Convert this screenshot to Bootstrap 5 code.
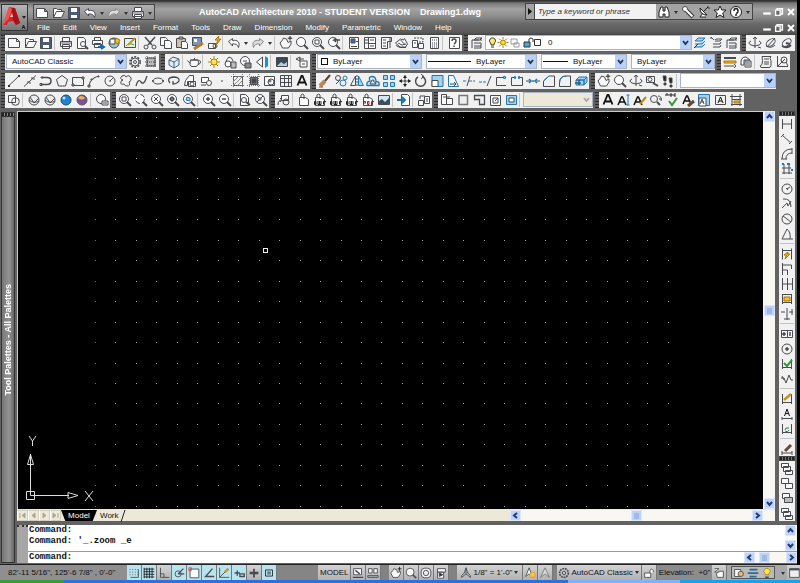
<!DOCTYPE html>
<html lang="en">
<head>
<meta charset="utf-8">
<meta name="viewport" content="width=device-width, initial-scale=1">
<title>AutoCAD Architecture 2010 - Drawing1.dwg</title>
<link href="https://cdn.jsdelivr.net/npm/bootstrap@5.3.0/dist/css/bootstrap.min.css" rel="stylesheet">
<style>
html,body{height:100%}
body{font:8px/12px "Liberation Sans",Arial,sans-serif;color:#111;background:#000;overflow:hidden}
.app-frame{height:100vh}
.app-main{background:#626262;margin-right:3px}
.fit{min-height:0;min-width:0}
button,input,select{font:inherit;color:inherit;border:0;padding:0;background:none;border-radius:0;min-width:0}
svg{display:block;flex:none}
.ico{width:16px;height:16px;fill:none;stroke:#484b50;stroke-width:1}
.tool{width:16px;height:16px;flex:none;overflow:hidden}
.head{height:35px;background:linear-gradient(#333 0,#333 1px,#777 3px,#a2a2a2 9px,#8b8b8b 17px,#686868 24px,#5b5b5b 32px,#444 35px);color:#fff}
.logo-btn{width:27px;height:27px;margin:4px 0 0 1px;background:linear-gradient(#b5b5b5,#777);border:1px solid #333;align-self:flex-start}
.quick{height:16px;border:1px solid #444;background:linear-gradient(#b0b0b0,#8e8e8e);margin:4px 0 0 5px}
.quick .ico,.info .ico,.win .ico{--pf:#fff}
.caption{font-weight:bold;font-size:9px;line-height:16px;padding-top:4px;white-space:pre}
.info{height:17px;border:1px solid #444;background:#a3a3a3;margin:3px 8px 0 0}
.info .expand{width:8px}
.info .expand .ico{margin-left:-3px}
.info input{width:122px;height:15px;background:#f2f2f2;font-style:italic;color:#333;padding-left:3px;border-left:1px solid #444}
.info input::placeholder{color:#333;opacity:1}
.win .tool{width:12px}
.win .ico{width:12px;stroke:#fff;stroke-width:2}
.menus{padding-left:2px}
.menus a{color:#fff;text-decoration:none;padding:0 6px 0 7px;line-height:16px}
.bars{gap:3px;padding-bottom:3px}
.bar-row{height:16px}
.strip{height:16px;padding-left:5px;background:repeating-linear-gradient(#2c2c2c 0 1px,#5c5c5c 1px 3px) left/4px 100% no-repeat,#f1f1f1;margin-right:2px}
.strip.first{margin-left:1px}
.sepa{width:4px;height:14px;flex:none;border-left:1px solid #c4c4c4;margin-top:1px}
.down{width:8px;height:16px;flex:none;display:flex;align-items:center;justify-content:center}
.down::after{content:"";border:2px solid transparent;border-top:3px solid #333;border-bottom:0}
.combo{height:15px;background:#fff;border:1px solid #a9b4c4;position:relative;display:flex;align-items:center}
.combo select{appearance:none;width:100%;height:13px;background:transparent;padding-left:5px;outline:0}
.combo::after{content:"";position:absolute;right:0;top:0;width:11px;height:13px;pointer-events:none;background:url("data:image/svg+xml,%3Csvg xmlns='http://www.w3.org/2000/svg' viewBox='0 0 11 13'%3E%3Cpath d='M3 5l2.500 3L8 5' fill='none' stroke='%23234' stroke-width='1.800'/%3E%3C/svg%3E") #b9d0fb}
.combo.off,.combo.off::after{background-color:#ece9d8}
.combo.off::after{filter:grayscale(1) opacity(.35)}
.swatch{width:7px;height:7px;border:1px solid #111;margin-left:3px;flex:none}
.dash{height:1px;background:#111;margin-left:1px;flex:none}
.w-a{width:121px}.w-b{width:105px}.w-c{width:111px}.w-d{width:86px}.w-e{width:84px}.w-f{width:96px}.w-g{width:70px}.w-layer{width:207px}
.dash.l1{width:43px}.dash.l2{width:25px}
.palette{width:14px;margin:1px 2px 1px 1px;border:1px solid #333;background:linear-gradient(90deg,#777,#949494 60%,#666);color:#fff;font-size:9px}
.palette .knob{height:4px;border-bottom:1px solid #333;background:repeating-linear-gradient(90deg,#222 0 2px,#888 2px 3px);width:100%}
.palette span{writing-mode:vertical-rl;transform:rotate(180deg);font-weight:bold;white-space:nowrap}
.view{border:1px solid #ccc;border-right:0;border-bottom:0;background:#000;position:relative;overflow:hidden}
.grid-dots{position:absolute;left:0;top:0;width:100%;height:100%;fill:#aaa}
.ucs{position:absolute;left:7px;bottom:1px;fill:none;stroke:#ddd}
.vbar{width:12px;background:#f8f7f2}
.vbar button,.hbar button{width:11px;height:11px;background:#bed2fa;border:1px solid #dbe6ff;flex:none}
.vbar button svg,.hbar button svg{margin:0 auto;stroke:#223a70;fill:none;stroke-width:2}
.hbar{background:#f8f7f2;height:11px}
.tabsrow{height:12px;background:#ece9d8;padding-top:1px;line-height:11px}
.tabnav button{width:11px;height:11px;border:1px solid #d2cfc0;border-left-color:#fff}
.tabnav svg{fill:#aaa890;stroke:#aaa890}
.tab-on{background:#000;color:#fff;width:36px;clip-path:polygon(0 0,100% 0,88% 100%,12% 100%);text-align:center}
.tab-off{padding-left:3px}
.dock{width:16px;background:#f1f1f1;margin:0 2px 0 4px;overflow:hidden}
.dock .tool{height:15px;flex:none}
.dock .sepa{width:14px;height:3px;border-left:0;border-top:1px solid #c4c4c4;margin:2px 1px 0}
.dock .knob{height:5px;flex:none;background:repeating-linear-gradient(90deg,#222 0 2px,#777 2px 3px);border:1px solid #444}
.cmd{background:#fff;font:bold 9px/11px "Liberation Mono","Courier New",monospace;margin:4px 0 1px;height:38px}
.cmd .side{width:11px;background:#a6a6a6;border-top:2px dotted #333}
.cmd .past{border-bottom:1px solid #999;height:27px;white-space:nowrap}
.cmd input{width:100%;height:11px;outline:0}
.cmd .past,.cmd input{padding-left:1px}
.status{height:16px;background:#a9a9a9;border-top:1px solid #222;margin-right:3px}
.status .cell{height:15px;background:linear-gradient(#d3d3d3,#b2b2b2);border-right:1px solid #777;display:flex;align-items:center;flex:none;width:15px;justify-content:center;white-space:nowrap;overflow:hidden}
.status .cell .ico{width:14px;height:14px}
.status .cell.on{background:#b9e4ef}
.status .cell.wide{width:auto;padding:0 2px}
.status .cell.snug{padding:0}
.status .gap-dark{width:8px;background:#828282;flex:none}
.status .gap-thin{width:4px}
.status .gap-mid{flex:none;width:41px;background:#858585}
.coords{width:127px;background:#8f8f8f;padding-left:8px;line-height:15px;flex:none;white-space:nowrap}
.elev{background:#8c8c8c;line-height:15px;padding:0 2px;white-space:nowrap;flex:none}
.tray{border:1px solid #555;height:13px;background:#bbb;margin:1px 4px 0 4px;flex:none}
.status .tray .cell{width:14px;border:0;height:11px;background:none}
.task{height:3px;background:linear-gradient(90deg,#3c9b3c 0 8%,#2b72e0 8% 71%,#7fb2f7 71% 85%,#12a5ee 85%)}
</style>
</head>
<body>
<div class="app-frame d-flex flex-column">
 <div class="app-main fit d-flex flex-column flex-grow-1">
  <header class="head d-flex flex-shrink-0">
   <button class="logo-btn" aria-label="Application menu"><svg width="25" height="25" viewBox="0 0 25 25"><path d="M1 20L7 2l6 1 5 15-4 2-3-4-5 1-1 3z" fill="#d8252c"/><path d="M9 3l4 0 5 15-4 2-3-5z" fill="#a5141a"/><path d="M1 20L7 2l3 2-3 9z" fill="#f2554f"/><path d="M8 12l2-4 1 4z" fill="#f7c9c6"/><path d="M20 11h4l-2 3z" fill="#222"/><path d="M20 24l1.500-4L23 24M20.500 22.500h2" stroke="#222" fill="none"/></svg></button>
   <div class="flex-grow-1 d-flex flex-column">
    <div class="d-flex justify-content-between">
     <div class="quick d-flex" data-tools="new open save undo . redo . print ."></div>
     <div class="caption">AutoCAD Architecture 2010 - STUDENT VERSION    Drawing1.dwg</div>
     <div class="d-flex">
      <div class="info d-flex"><button class="tool expand" aria-label="Expand"><svg class="ico" viewBox="0 0 16 16"><path d="M5 4l4 3.500L5 11z" fill="#111" stroke="none"/></svg></button><input type="text" aria-label="Search" placeholder="Type a keyword or phrase"><span class="d-flex" data-tools="bino . key dish star help2 ."></span></div>
      <div class="win d-flex pt-1" data-tools="wmin wmax wclose"></div>
     </div>
    </div>
    <div class="d-flex justify-content-between">
     <nav class="menus d-flex"><a href="#">File</a><a href="#">Edit</a><a href="#">View</a><a href="#">Insert</a><a href="#">Format</a><a href="#">Tools</a><a href="#">Draw</a><a href="#">Dimension</a><a href="#">Modify</a><a href="#">Parametric</a><a href="#">Window</a><a href="#">Help</a></nav>
     <div class="win d-flex" data-tools="wmin wmax wclose"></div>
    </div>
   </div>
  </header>

  <div class="bars d-flex flex-column flex-shrink-0">
   <div class="bar-row d-flex">
    <div class="strip first d-flex" data-tools="new open save | print preview publish dwf markup | cut copy paste brush blockedit | undo . redo . | pan zoom zwin zprev | props dcenter tpal sheets mset calc | help"></div>
    <div class="strip d-flex"><span class="d-flex" data-tools="layers"></span>
     <div class="combo w-layer"><svg width="62" height="13" viewBox="0 0 62 13" fill="none" stroke="#333"><path d="M5 9V7.500a3 3 0 1 1 3 0V9z" fill="#ffe86b"/><path d="M5 11h3"/><circle cx="17" cy="6.500" r="2.500" fill="#ffd83d" stroke="#a67a00"/><path d="M17 1v2M17 10v2M11.500 6.500h2M20.500 6.500h2M13 2.500l1.500 1.500M21 2.500L19.500 4M13 10.500L14.500 9M21 10.500L19.500 9" stroke="#a67a00"/><path d="M25 3h6v5h-6zM28 7h5v4h-5z" stroke="#999"/><path d="M38 6h6v5h-6z" fill="#48a5da"/><path d="M43 6V3q2-2 4 0v3"/><path d="M48.500 3.500h6v6h-6z" fill="#fff"/></svg><select aria-label="Layer" class="px-0"><option>0</option></select></div>
     <span class="d-flex" data-tools="lay1 lay2 layers"></span></div>
    <div class="strip d-flex" data-tools="orbit orb2 orb3"></div>
   </div>
   <div class="bar-row d-flex">
    <div class="strip first d-flex"><div class="combo w-a"><select aria-label="Workspace"><option>AutoCAD Classic</option></select></div><span class="d-flex" data-tools="gear wsave"></span></div>
    <div class="strip d-flex" data-tools="cube | teapot | sun matl matb mirror3 | imgd | rset"></div>
    <div class="strip d-flex gap-1"><div class="combo w-b"><span class="swatch"></span><select aria-label="Color"><option>ByLayer</option></select></div><div class="combo w-c"><span class="dash l1"></span><select aria-label="Linetype"><option>ByLayer</option></select></div><div class="combo w-d"><span class="dash l2"></span><select aria-label="Lineweight"><option>ByLayer</option></select></div><div class="combo w-e"><select aria-label="Plot style"><option>ByLayer</option></select></div></div>
    <div class="strip d-flex" data-tools="dist massp | list locate"></div>
   </div>
   <div class="bar-row d-flex">
    <div class="strip first d-flex" data-tools="line xline pline poly rect arc circle cloud spline ellipse earc insert mkblock point hatch grad region table text"></div>
    <div class="strip d-flex" data-tools="erase copyo mirror offset array move rotate scale stretch trim extend breakp break join chamfer fillet explode"></div>
    <div class="strip d-flex"><span class="d-flex" data-tools="pan zoom orbit camera walk |"></span><div class="combo w-f"><select aria-label="View"><option></option></select></div></div>
   </div>
   <div class="bar-row d-flex">
    <div class="strip first d-flex" data-tools="vs1 | vs2 vs2 vblue vcol | vman"></div>
    <div class="strip d-flex" data-tools="zwin zdyn zx zcen zobj | zin zout | zall zext"></div>
    <div class="strip d-flex" data-tools="xref | att dwfa dwfa dwfa pdfa image | import | fields"></div>
    <div class="strip d-flex"><span class="d-flex" data-tools="vp1 vp2 vp3 vp4 vp5 |"></span><div class="combo off w-g"><select aria-label="Viewport scale" disabled><option></option></select></div></div>
    <div class="strip d-flex" data-tools="text mtext tedit find spell tstyle tscale tjust tspace"></div>
   </div>
  </div>

  <main class="fit d-flex flex-grow-1">
   <aside class="palette d-flex flex-column align-items-center"><div class="knob"></div><span class="my-auto">Tool Palettes - All Palettes</span></aside>
   <div class="fit d-flex flex-column flex-grow-1">
    <div class="fit d-flex flex-grow-1">
     <section class="fit d-flex flex-column flex-grow-1">
      <div class="fit d-flex flex-grow-1">
       <div class="view flex-grow-1">
        <svg class="grid-dots" id="dots"></svg>
        <svg class="ucs" width="76" height="72" viewBox="0 0 76 72"><path d="M1.500 55.500h8v8h-8zM5.500 59.500V18M5.500 59.500H44M2.500 28.500l3-10 3 10zM43 56.500l10 3-10 3zM4 0l3.500 5L11 0M7.500 5v5M60 55l8 10M68 55l-8 10"/></svg>
       </div>
       <div class="vbar d-flex flex-column justify-content-between align-items-center" data-scroll="up thumb down"></div>
      </div>
      <div class="tabsrow d-flex flex-shrink-0">
       <div class="tabnav d-flex"><button aria-label="First"><svg width="9" height="9"><path d="M2 2v5M7 2v5L4 4.500z"/></svg></button><button aria-label="Previous"><svg width="9" height="9"><path d="M6 2v5L3 4.500z"/></svg></button><button aria-label="Next"><svg width="9" height="9"><path d="M3 2v5l3-2.500z"/></svg></button><button aria-label="Last"><svg width="9" height="9"><path d="M2 2v5l3-2.500zM7 2v5"/></svg></button></div>
       <button class="tab-on">Model</button>
       <button class="tab-off d-flex">Work<svg width="8" height="12"><path d="M2 12L6 0" stroke="#222"/></svg></button>
       <div class="flex-grow-1"></div>
       <div class="hbar d-flex justify-content-between col-4" data-scroll="left thumb right"></div>
       <div class="vbar"></div>
      </div>
     </section>
     <aside class="dock d-flex flex-column" data-tools="k dl da darc dord | drad djog ddia dang | dq dbase dcont dsp dbr | tol cen insp jogl | dedit dtedit dupd | dstyle k fr1 fr2 fr3 fr1"></aside>
    </div>
    <div class="cmd d-flex flex-shrink-0">
     <div class="side"></div>
     <div class="flex-grow-1 d-flex flex-column">
      <div class="past d-flex justify-content-between"><div>Command:<br>Command: '_.zoom _e</div><div class="vbar d-flex flex-column justify-content-between" data-scroll="up down"></div></div>
      <div class="d-flex"><input type="text" aria-label="Command line" value="Command:"><div class="hbar d-flex justify-content-between flex-shrink-0 gap-1" data-scroll="left thumb . right"></div></div>
     </div>
    </div>
   </div>
  </main>
 </div>
 <footer class="status d-flex flex-shrink-0">
  <div class="coords">82'-11 5/16", 125'-6 7/8" , 0'-0"</div>
  <span class="d-flex" data-cells="+snap +gridi ortho +polar +osnap +track +ducs +dyn lwt +qp"></span>
  <div class="gap-mid"></div>
  <button class="cell wide">MODEL</button>
  <span class="d-flex" data-cells="qvl qvd"></span><div class="gap-dark"></div>
  <span class="d-flex" data-cells="pan zoom wheel motion"></span><div class="gap-dark"></div>
  <button class="cell wide"><svg class="ico" viewBox="0 0 16 16"><path d="M8 2v7M8 9l-5 4V11l3-3 2-6 2 6 3 3v2z"/></svg>1/8" = 1'-0"<span class="down"></span></button>
  <span class="d-flex" data-cells="anno1 anno2"></span><div class="gap-dark gap-thin"></div>
  <button class="cell wide snug"><svg class="ico" viewBox="0 0 16 16"><circle cx="8" cy="8" r="5" stroke-dasharray="2 1" stroke-width="2"/><circle cx="8" cy="8" r="2"/></svg>AutoCAD Classic<span class="down"></span></button>
  <span class="d-flex" data-cells="lock"></span>
  <div class="elev">Elevation:&nbsp; +0"</div>
  <span class="d-flex" data-cells="zrep"></span>
  <span class="tray d-flex" data-cells="tr1 tr2 bulb"></span>
  <button class="down" aria-label="Status bar menu"></button>
  <span class="d-flex" data-cells="clean"></span>
 </footer>
 <div class="task flex-shrink-0"></div>
</div>
<script src="https://cdn.jsdelivr.net/npm/bootstrap@5.3.0/dist/js/bootstrap.bundle.min.js"></script>
<script>
const p = (d, a = '') => `<path d="${d}" ${a}/>`;
const c = (x, y, r, a = '') => `<circle cx="${x}" cy="${y}" r="${r}" ${a}/>`;
const W = 'style="fill:var(--pf,#fafafa)"';
const blue = 'stroke="#2177b5"', lb = 'fill="#9fd3ef" stroke="#2177b5"', gold = 'fill="#f3c02c" stroke="#a87505"', G = 'fill="#bbb"';
const lens = c(7, 7, 4.5, 'fill="#fff"') + p('M10 10l4 4', 'stroke-width="2"');
const dim = p('M3.500 3v10M12.500 3v10M3.500 11.500h9');
const page = p('M3.500 5.500h6l3 2v6h-9zM5 5.500V3q2-2 3 0v4', W);
const ball = c(8, 8, 5, 'fill="#eee"');
const letterA = (x, y, s) => p(`M${x} ${y}l${s / 2 - .5} ${-s}h1l${s / 2 - .5} ${s}M${x + 1} ${y - 3}h${s - 2}`, 'stroke="#111" stroke-width="1.500"');
const I = {
 new: p('M2.500 3.500h8l3 3v6h-11zM10.500 3.500v3h3', W),
 open: p('M3.500 12.500v-9h3l1 1h4v2M3.500 12.500l3-6h8l-3 6z', W),
 save: p('M2.500 2.500h11v11h-11z', 'fill="#4b5d75"') + p('M5 3h6v4H5zM5 10h6v3H5z', 'fill="#fff" stroke="none"'),
 undo: p('M2.500 6.500l4-3v2c5-1 8 2 6 7-1-3-3-4-6-3.500v2z', W),
 redo: p('M13.500 6.500l-4-3v2c-5-1-8 2-6 7 1-3 3-4 6-3.500v2z', 'fill="#ddd" stroke="#888"'),
 print: p('M4.500 6.500v-4h7v4M2.500 6.500h11v5h-11zM4.500 9.500h7v4h-7z', W) + p('M3 8h10', 'stroke="#666"'),
 preview: p('M3.500 2.500h6l2 2v9h-8z', W) + c(9, 9, 2.5, 'fill="#fff"') + p('M11 11l3 3', 'stroke-width="2"'),
 publish: p('M4.500 5.500v-3h6v3M2.500 5.500h10v4h-10zM4.500 8.500h6v4h-6z', W) + p('M8 12h5M11 10l3 2-3 2', 'stroke="#1669b0" stroke-width="2"'),
 dwf: c(8, 8, 5, 'fill="#9fc4cf"') + p('M4 4h5v5H4z', 'fill="#fff"') + p('M10 3l4 2-2 4-3-2z', gold),
 markup: p('M2.500 3.500h11v9h-11z', 'fill="#e7f2e3"') + p('M4 11q3-4 8-1', 'stroke="#3c8d48"') + p('M6 10l7-7', 'stroke="#c59716" stroke-width="2"'),
 cut: p('M3 2l7 8M13 2l-7 8', 'stroke-width="1.500"') + c(4, 12, 2) + c(12, 12, 2),
 copy: p('M2.500 2.500h5l2 2v6h-7z', W) + p('M6.500 5.500h5l2 2v6h-7z', W),
 paste: p('M2.500 3.500h9v9h-9z', 'fill="#c9c2af"') + p('M5 2h4v2H5z', G) + p('M7.500 6.500h4l2 2v5h-6z', W),
 brush: p('M2.500 2.500h9v8h-9z', 'fill="#7898ba"') + p('M4 4h3v3H4z', 'fill="#fff" stroke="none"') + p('M4 14l9-6', 'stroke="#bb7a26" stroke-width="3"'),
 blockedit: p('M2.500 8.500h7v5h-7z', W) + c(9, 11, 2) + p('M9 5h3l-2 5 5-6h-3l1-3z', gold),
 pan: p('M4.500 5L2 8l2.500 5h6L13 9V6l-3 1.500L8.500 4 5.500 3z', W) + p('M12 1v4.500M9.800 3.200h4.500', 'stroke="#222"'),
 zoom: lens,
 zwin: lens + p('M5 5h4v4H5z'), zprev: lens + p('M14 5H8l2-2M8 5l2 2', 'stroke-width="1.500"'),
 zdyn: c(7, 7, 4.5, 'fill="#fff" stroke-dasharray="5 2"') + p('M10 10l4 4', 'stroke-width="2"'), zx: lens + p('M5 5l4 4M9 5l-4 4'), zcen: lens + p('M4 7h6M7 4v6M5.500 5.500h3v3h-3z'), zobj: lens + p('M5 8l1-3 3 1v3z', lb),
 zin: lens + p('M5 7h4M7 5v4', 'stroke-width="1.500"'), zout: lens + p('M5 7h4', 'stroke-width="1.500"'),
 zall: p('M3.500 2.500h5l3 3v8h-8z', W) + c(7, 8, 2.5) + p('M9 10l4 3', 'stroke-width="2"'), zext: lens + p('M4 4l2 2M10 4L8 6M4 10l2-2M6 6h2v2H6z'),
 props: p('M3.500 2.500h9v11h-9z', W) + p('M5 4h4v4H5z', 'fill="#3f6fa6"') + p('M5 11.500h6M10 6.500h2'),
 dcenter: p('M2.500 2.500h11v11h-11zM6.500 2.500v11M6.500 8.500h7', W) + p('M3 5h3M3 8h3M8 5h4M8 11h4'),
 tpal: p('M3.500 2.500h10v4h-4v7h-6z', W) + p('M5 5h3M5 8h3M5 11h3M12 3v10'),
 sheets: p('M1.500 8l5-4 3 1 1-1.500 3 5.500-2 3H6z', W) + p('M2 10.500l4 2h6M4 8l4 2 4-1M6.500 5l4 4'),
 mset: p('M2.500 5.500h5v7h-5zM8.500 8.500h5v5h-5z', W) + p('M7 3h6v4H8M4 3h2M4 8h2', 'stroke-dasharray="2 1"'),
 calc: p('M4.500 2.500h8v11h-8z', W) + p('M6 5h5M6 8h5M6 10h5M6 12h5', 'stroke-dasharray="1 1"'),
 help: p('M3.500 2.500h10v11h-10z', W) + p('M6 6q0-2 2-2t2 2-2 3M8 10.500V12', 'stroke-width="1.500"'),
 layers: p('M5 5l2-2h6l-2 2zM5 8h7M5 11h7M5 13h7M3 5v8M3 5h7M12 3v3M12 8v5'),
 lay1: p('M3 6l3-3h7l-3 3zM3 9h7l3-3M3 12h7l3-3', lb) + p('M2 13l4-4', 'stroke="#222"'),
 lay2: p('M7 5l1-1h6l-2 2H7M5 9h7l1-2M5 12h7l1-2M3 2l3 3M3 2v2'),
 orbit: p('M8 2v11M8 2L6 4M8 2l2 2M4 6q-4 2 0 4 4 2 8 0 4-2 0-4M11 12l3 1'),
 orb2: '<ellipse cx="8" cy="7.500" rx="5" ry="3" transform="rotate(-35 8 8)"/>' + p('M4 12l8-9M3 11q5 3 9-1'),
 orb3: '<ellipse cx="8" cy="7.500" rx="5" ry="3" transform="rotate(-35 8 8)"/>' + p('M3 11q5 3 9-1M7 8l4 1', 'stroke-width="2"'),
 gear: c(8, 8, 5.2, 'stroke-width="1.500" stroke-dasharray="2 1.300"') + c(8, 8, 4) + c(8, 8, 1.5),
 wsave: p('M4 4h8v8H4z', G) + p('M2 4h12M2 8h12M2 12h12M4 2v12M12 2v12', 'stroke-dasharray="1 1"'),
 cube: p('M3 6l4-3 6 2v6l-5 3-5-3zM3 6l5 2 5-3M8 8v6', 'fill="#e1eff5" stroke="#476473"'),
 teapot: p('M4.500 6Q3 12 6 12.500h4q3.500-1.500 2-6.500zM4.500 6h8M8.500 6V4M4.500 9Q3 9 1.500 6.500M12.500 7q3-1 1.500 2.500l-2 1', W),
 sun: p('M8 2v12M2 8h12M4 4l8 8M12 4l-8 8', 'stroke="#b78903"') + c(8, 8, 3, 'fill="#ffe15a" stroke="#b78903"'),
 matl: p('M4 12q-2-4 3-9 3 0 4 4') + c(6, 10, 3, W) + p('M9 8h5v6H9z', G),
 matb: c(7, 7, 4.5, W) + p('M7 9h6v5H7z', 'fill="#888"') + p('M5 7h4'),
 mirror3: p('M8.500 3v10L2.500 8z', W) + p('M11 2v12l3-2V4z', 'fill="#1594cf" stroke="none"'),
 imgd: p('M2.500 3.500h11v9h-11z', 'fill="#384a57"') + p('M3 12l4-4 3 2 3-2v4z', 'fill="#b1ced6" stroke="none"'),
 rset: p('M2 5l4-2v4zM5 5h5M6 7h7v6H6zM8 10h3', W),
 dist: p('M2 4h12', 'stroke-width="2"') + p('M2 7h12v2H2z', gold) + p('M2 12h10M12 10l2 2-2 2'),
 massp: p('M3 8q0-5 5-5l4 3H6v5H3zM7 7h6v6H7zM8 9h4M8 11h4', W),
 list: p('M4 2.500h9q-2 2 0 4v5q0 2-2 2H3q-2-2 1-3 1-4 0-8zM6 5h5M6 8h5M6 10h5'),
 locate: p('M3.500 2v10.500H14M3.500 12.500L11 5') + c(10, 6, 3) + p('M12 8l2 4'),
 line: p('M3 12.500L13 3') + p('M2 12h2v2H2zM12 2h2v2h-2z', 'stroke="none" fill="#333"'),
 xline: p('M2 13.500L14 2.500') + p('M5 9h3v3M9 5h3v3', 'stroke-dasharray="2 1"'),
 pline: p('M4 4.500h5q4 0 4 3.500t-4 3.500H3', 'stroke-width="1.500"') + p('M2 10.500h2v2H2zM3 4h2v1H3z'),
 poly: p('M8 2.500l5.500 4-2 6.500h-7l-2-6.500z'), rect: p('M2.500 4.500h11v8h-11z') + p('M2 11h2v2H2zM12 4h2v2h-2z', G),
 arc: p('M3 13Q4 5 13 3', 'stroke-width="1.200"') + p('M2 12h2v2H2zM5 6h1v1H5zM12 3h1v1h-1z', G), circle: c(8, 8, 5) + p('M8 8l3-3M7 8h2'),
 cloud: p('M4 3q3-2 4 1 3-3 5 1 1 3-2 4 2 4-2 4-2 0-3-2-4 1-3-2 0-2 2-2-4-1-1-4z'),
 spline: p('M2 13q2-8 5-4 3 4 6-6', 'stroke-width="1.300"'), ellipse: '<ellipse cx="8" cy="8" rx="5" ry="3"/>' + p('M2.500 7.500h1v1h-1zM12.500 7.500h1v1h-1z'),
 earc: p('M4 10Q0 5 7 4q7 0 6 4-2 3-6 3v-3', 'stroke-width="1.300"'),
 insert: p('M3.500 7.500l4-5h4v6h-6v4h-3zM6.500 8.500h7v5h-7z', W) + c(10, 11, 2), mkblock: p('M3.500 4.500h7v5h-7z', W) + c(11, 10, 2.5, W) + p('M3 12h5'),
 point: p('M7.500 7.500h1v1h-1z', 'stroke-opacity=".6"'),
 hatch: p('M3.500 3.500h9v9h-9z') + p('M3 9l6-6M4 12l8-8M7 13l6-6', 'stroke="#888"') + p('M1 3.500h14M1 12.500h14M3.500 1v14M12.500 1v14', 'stroke="#777" stroke-dasharray="1 1"'),
 grad: p('M4.500 4.500h7v7h-7z', 'fill="#888"') + p('M1 3.500h14M1 12.500h14M3.500 1v14M12.500 1v14', 'stroke="#777" stroke-dasharray="1 1"') + p('M6 6h4v4H6z', 'fill="#444"'),
 region: p('M2.500 3.500h10v9h-10z', W) + c(9, 9, 3) + c(8, 8, 1), table: p('M2.500 2.500h11v11h-11zM2.500 5.500h11M2.500 9.500h11M6.500 2.500v11M10.500 2.500v11'),
 text: p('M3.500 12.500L7.500 3h1l4 9.500M5.500 9.500h5', 'stroke="#111" stroke-width="1.800"'),
 erase: p('M3 13l5-5', 'stroke="#b9885a" stroke-width="4"') + p('M8 8l5-6', 'stroke="#5b4129" stroke-width="2"') + p('M2 14h4', 'stroke="#b9472f"'),
 copyo: c(5, 5, 2.5) + c(10, 10, 3, blue) + c(12, 5, 2, blue) + p('M3 11l4-4'),
 mirror: p('M6.500 3v9.500h-5z') + p('M9.500 3v9.500h5z', lb) + p('M8 2v12', 'stroke-dasharray="2 1"'),
 offset: p('M2 12.500h12q1-4-3-4 0-5-4-5T5 8q-4 1-3 4.500z', blue + ' stroke-width="1.300" fill="#d5ecf7"') + p('M5 11h6q0-2-2-2 0-3-2-2z'),
 array: p('M2.500 2.500h4v4h-4zM9.500 2.500h4v4h-4zM2.500 9.500h4v4h-4zM9.500 9.500h4v4h-4z', lb),
 move: p('M8 2.500v11M2.500 8h11', 'stroke-dasharray="4 1 1 1"') + p('M6 5l2-3 2 3zM6 11l2 3 2-3zM5 6L2 8l3 2zM11 6l3 2-3 2z', 'fill="#222" stroke="none"') + c(8, 8, 1),
 rotate: p('M9 3.500A5 5 0 1 1 5 4', 'stroke-width="1.500"') + p('M8 1l3 2.500L8 6'),
 scale: p('M3 2.500h11v11H3z', lb) + p('M3 7.500h6v6H3z', 'fill="#fff"'), stretch: p('M3.500 2.500h5l5 11h-10z', 'fill="#eef7fb" stroke="#2177b5"') + p('M5 11h5M9 9l2 2-2 2'),
 trim: p('M2 8h4M8 8h6', 'stroke-dasharray="3 1" ' + blue) + p('M9 3L6 13'), extend: p('M2 9h8', 'stroke-dasharray="3 1" ' + blue) + p('M14 3l-4 10'),
 breakp: p('M13 4.500H3.500v8H13M10 4.500h3') + p('M10.500 3.500h2v2h-2z', lb), break: p('M5 4.500H2.500v8h11v-8H11') + p('M5.500 3.500h1v2h-1zM9.500 3.500h1v2h-1z', lb),
 join: p('M1 8h4M11 8h4') + p('M4 6l2 2-2 2M12 6l-2 2 2 2M7 8h2', blue + ' stroke-width="1.500"'),
 chamfer: p('M2.500 13.500V8L8 3h5.500v10.500z') + p('M2.500 8L8 3', blue), fillet: p('M2.500 13.500V10q0-7 7-7h4v10.500z') + p('M2.500 10q0-7 7-7', blue),
 explode: p('M3 7l3-3h8l-3 3zM3 7h8v5H3zM11 7l3-3v5l-3 3z', lb) + p('M6 7v5M2 10h6', 'stroke="#135"'),
 camera: p('M2.500 3.500h8v6h-8z', W) + c(6, 6.500, 2) + p('M9 10l5 3', 'stroke-width="2"'), walk: p('M3 3h3v5H4zM9 5h3v5h-2zM4 10h2v2H4zM10 12h2v2h-2z', 'fill="#222"'),
 vs1: p('M2.500 3.500h7v7h-7z', W) + c(9.5, 9.5, 3.8), vs2: ball + p('M4 5l4 6 5-5M3 8q5 4 10 1'),
 vblue: c(8, 8, 5, 'fill="#2380d8" stroke="#155"') + c(6, 6, 1.5, 'fill="#bfe1ff" stroke="none"'), vcol: c(8, 8, 5, 'fill="#7a53a8" stroke="#555"') + p('M4 6q3-4 7 0-3 3-7 0', 'fill="#f3b444" stroke="none"'),
 vman: c(7, 7, 4.500, W) + p('M8 9h6v4H8z', W) + p('M9 11h4'),
 xref: p('M5.500 3.500h7v5h-7z', W) + c(10, 10, 3) + p('M2 13q0-5 4-5M4 6l2 2-2 2'), att: page,
 dwfa: page + p('M2.500 12.500v-3h1.500v3zM6 9v3.500h3V9M7.500 9v3M11.500 12.500v-3H14', 'stroke="#222"'), pdfa: page + p('M3.500 13V9.500h2v1.500h-2M7.500 9.500v3h1.500v-3zM14 9.500h-2.500v4M11 11h2', 'stroke="#a31b1b"'),
 image: p('M2.500 3.500h11v9h-11z', 'fill="#d6e8ef"') + p('M3 12V9l3-2 3 3 4-4v6z', 'fill="#345264" stroke="none"'),
 import: p('M5.500 2.500h6l2 2v9h-8z', W) + p('M1 8h7M6 5l3 3-3 3', 'stroke="#1579a8" stroke-width="1.800"'), fields: p('M2.500 8.500h5v5h-5zM8.500 4.500h5v7h-5zM4 7V4h5', W) + p('M10 7h2M10 9h2'),
 vp1: p('M2.500 2.500h5v10h-5zM7.500 6.500h6v6h-6z', W) + p('M4 5h7'), vp2: p('M4 3.500h8.500v9H4z', 'fill="#eee" stroke="#777" stroke-width="1.500"'), vp3: p('M3.500 3.500h10v9h-5v-5h-5z', 'fill="#eee" stroke-width="1.300"'),
 vp4: p('M3.500 3.500h10v10h-10z', W) + p('M6 11V6h5v5zM8 9l3-3'), vp5: p('M3.500 3.500h10v9h-10z', lb) + p('M6 6h5v4H6z', 'fill="#fff"'),
 mtext: letterA(2, 13, 8) + p('M12 3v10M10.500 3h3M10.500 13h3', blue), tedit: letterA(2, 13, 8) + p('M8 12l6-7', 'stroke="#b68b16" stroke-width="2"'),
 find: c(6, 7, 3.500) + p('M9 10l3 3', 'stroke-width="2"') + p('M10 4q4 0 3 5M11 7h3'), spell: p('M2 4V2h2v2M6 2v2h2V2zM12 2h-2v2h2', 'stroke="#222"') + p('M5 9l3 4 5-7', 'stroke="#36953b" stroke-width="2"'),
 tstyle: letterA(3, 12, 8) + p('M8 14l6-5', 'stroke="#684a2d" stroke-width="3"'), tscale: p('M2.500 2.500h11v11h-11z', lb) + p('M3 6h7v8H3z', 'fill="#fff"') + p('M4 12l2-5 2 5M5 10h3'),
 tjust: p('M3.500 3.500h10v9h-10z') + p('M6 11l2.500-6L11 11M7 9h3', 'stroke="#111"'), tspace: p('M2 4.500h12M4 7.500h9M3 12.500h11M4 2v12M12 2v12') + p('M6 9h5v2H6z', gold),
 bino: p('M3 13V8l2-5h2v4h2V3h2l2 5v5H9v-3H7v3z', 'fill="#fff" stroke="#222"'), key: p('M6 6l7 7', 'stroke="#333" stroke-width="4"') + c(5, 5, 2.500, 'fill="#fff"') + p('M6 6l6.500 6.500', 'stroke="#fff" stroke-width="2"'),
 dish: p('M4 4q0 7 7 7zM7 9l-3 4h6M8 7l4-4M12 2v2h2', 'fill="#fff" stroke="#222"'), star: p('M8 2l1.800 4H14l-3.300 3 1.300 4.500L8 11l-4 2.500L5.300 9 2 6h4.200z', 'fill="#fff" stroke="#222"'),
 help2: c(8, 8, 5.500, 'fill="#fff" stroke="#222"') + p('M6 7q0-2.500 2-2.500T10 7 8 9M8 10v2', 'stroke="#222" stroke-width="1.500"'),
 wmin: p('M3 10h10', 'stroke-width="3"'), wmax: p('M5.500 6V3.500h7v7H10') + p('M3.500 5.500h6v7h-6z', 'fill="#666" stroke-width="1.800"'), wclose: p('M4 4l8 8M12 4l-8 8', 'stroke-width="2.500"'),
 dl: dim.replace('M3.500 11.500', 'M3.500 8'), da: p('M3 4l9 8M2 6l3-3M10 13l3-3'), darc: p('M3 13Q3 3 13 3M7 13q0-6 6-6M2 13h6M13 2v6'), dord: p('M3 12h10M5 3v10M10 4v9M3 7h9') + p('M3 3h2M8 3h3M12 9h2', blue + ' stroke-width="2"'),
 drad: c(8, 8, 5) + p('M8 8l3-2M7 7l2 2'), djog: p('M4 3q8-1 8 8M3 12l5-5 1 3 3-5'), ddia: c(8, 8, 5) + p('M4 5l8 6'), dang: p('M3 13h11M3 13L8 3M8 3q4 3 3 10'),
 dq: p('M3.500 2.500v11M12.500 2.500v11M3.500 4.500h9') + p('M9 6l-4 3h2.500l-1.500 4 5-5H8.500z', gold), dbase: p('M3.500 2v12M3.500 4h9v4M3.500 9h5v5'), dcont: p('M3.500 2v12M8.500 2v12M13.500 2v12M3 8h11'),
 dsp: dim + p('M3 3.500h10') + p('M5 6h6v4H5z', gold), dbr: p('M8 2v12M2 6h4M10 6h4M5 13h6M13 3v6'),
 tol: p('M2.500 4.500h11v7h-11zM8.500 4.500v7', W) + p('M5 6v4M3 8h4M11 6v4', 'stroke-width="1.500"'), cen: c(8, 8, 5) + p('M8 6v4M6 8h4', 'stroke-width="1.500"'),
 insp: dim + p('M5 7l3 3 5-6', 'stroke="#36953b" stroke-width="2"'), jogl: p('M2 7h3l2 5 3-8 2 5h2M3 5l2 4'),
 dedit: dim + p('M5 9l7-6', 'stroke="#c59716" stroke-width="2.500"'), dtedit: p('M3 11v3M13 11v3M3 12.500h10') + p('M5.500 10L8 3l2.500 7M6.500 7.500h3', 'stroke="#111"'), dupd: dim + p('M6 9q0-3 4-2M10 9q-1 3-4 1', 'stroke="#2b7a45"'),
 dstyle: p('M3 10v4M13 10v4M3 12h10') + p('M6 10l6-6', 'stroke="#684a2d" stroke-width="3"'),
 fr1: p('M2.500 2.500h7v4h-7zM6.500 9.500h7v4h-7zM4.500 5.500h7v5h-7z', W), fr2: p('M2.500 2.500h7v5h-7zM6.500 7.500h7v5h-7z', W), fr3: p('M3.500 2.500h7v5h-7z', W) + p('M5.500 6.500h8v5h-8z', G),
 snap: p('M3 4h10M3 7h10M3 10h10', 'stroke-dasharray="1 2"') + p('M13 4v9H4'), gridi: p('M2.500 2v12M5.500 2v12M8.500 2v12M11.500 2v12M2 3.500h12M2 6.500h12M2 9.500h12M2 12.500h12', 'stroke="#222"'),
 ortho: p('M4 2v11h10M4 9h4v4'), polar: c(7, 9, 3.500) + p('M7 9h7M7 9l6-6', 'stroke-width="1.500"'), osnap: p('M3.500 3.500h10v10h-10z', W) + p('M2 2h3v3H2z', 'stroke="#c44"'),
 track: p('M12 3l-8 9h10', 'stroke-width="1.500"'), ducs: p('M3 2v11h11M3 13l7-7') + p('M9 7l4-4', 'stroke="#d3951b" stroke-width="3"'), dyn: p('M3 8h6M6 5v6M9 9h5v3H9z', 'stroke-width="1.500"'),
 lwt: p('M8 3v10', 'stroke-width="2"') + p('M3 8h10', 'stroke-width="3"'), qp: p('M4 4.500h8v7H4zM6 7h4M6 9h4', 'stroke="#222"'),
 qvl: p('M3 3h9v7H3z', W) + p('M2 13h12M5 5l5 4', 'stroke-width="1.500"'), qvd: p('M3 3h4v5H3zM9 3h4v5H9z', W) + p('M2 11h12v2H2z'),
 wheel: '<rect x="2.500" y="2.500" width="11" height="11" rx="4" fill="#eee"/>' + c(8, 8, 3), motion: p('M4 3h9v4H4zM4 7h7v7H4z', W) + p('M6 8l4 2-4 2z', 'fill="#222"'),
 anno1: p('M7 2L3 12l4-3 4 4z', W) + c(11, 10, 3, 'fill="#ffc546" stroke="#dc9a24"'), anno2: p('M8 2L3 13l5-4 5 4z', 'stroke="#777" fill="#ddd"'),
 lock: p('M3 8h7v5H3zM9 8V5q2-3 4 0v2', W), zrep: p('M3 3h5L3 7h5M5 9l3-3h5v7H6z', W), tr1: p('M3 4h7v8H3z', W) + c(10, 9, 3, 'fill="#eebd61"'), tr2: p('M2 8h12M4 4h9M4 12h8', 'stroke="#246d9d" stroke-width="2"'),
 bulb: p('M6 10V9Q3 6 5 4q3-3 6 0 2 2-1 5v1z', 'fill="#ffe74d" stroke="#a68516"') + p('M6 13h4', 'stroke-width="2"'), clean: p('M3 3h11v10H3z', 'fill="#eee"') + p('M3 4h11', 'stroke-width="2"')
};
const svg = n => `<svg class="ico" viewBox="0 0 16 16">${I[n]}</svg>`;
document.querySelectorAll('[data-tools]').forEach(el => {
 el.innerHTML = el.dataset.tools.split(' ').map(n =>
  n === '|' ? '<span class="sepa"></span>' : n === '.' ? '<button class="down" aria-label="More"></button>' : n === 'k' ? '<div class="knob"></div>' :
  `<button class="tool" aria-label="${n}">${svg(n)}</button>`).join('');
});
document.querySelectorAll('[data-cells]').forEach(el => {
 el.innerHTML = el.dataset.cells.split(' ').map(n => {
  const on = n[0] === '+', k = on ? n.slice(1) : n;
  return `<button class="cell${on ? ' on' : ''}" aria-label="${k}">${svg(k)}</button>`;
 }).join('');
});
const arrows = { up: 'M2 6l2.500-3L7 6', down: 'M2 3l2.500 3L7 3', left: 'M6 2L3 4.500 6 7', right: 'M3 2l3 2.500L3 7', thumb: 'M2 3h5M2 5h5M2 7h5' };
document.querySelectorAll('[data-scroll]').forEach(el => {
 el.innerHTML = el.dataset.scroll.split(' ').map(k => k === '.' ? '<span class="px-1"></span>' :
  `<button aria-label="${k}"><svg width="9" height="9"${k === 'thumb' ? ' opacity=".35"' : ''}><path d="${arrows[k]}"${k === 'thumb' ? ' stroke-width="1"' : ''}/></svg></button>`).join('');
});
let dots = '';
for (let i = 0; i < 29; i++) for (let j = 0; j < 20; j++)
 dots += `<rect x="${77 + Math.round(i * 20.46)}" y="${5 + Math.round(j * 20.46)}" width="1" height="1"${i ? '' : ' opacity=".6"'}/>`;
document.getElementById('dots').innerHTML = dots + '<rect x="245.500" y="136.500" width="4" height="4" fill="none" stroke="#eee"/>';
</script>
</body>
</html>
